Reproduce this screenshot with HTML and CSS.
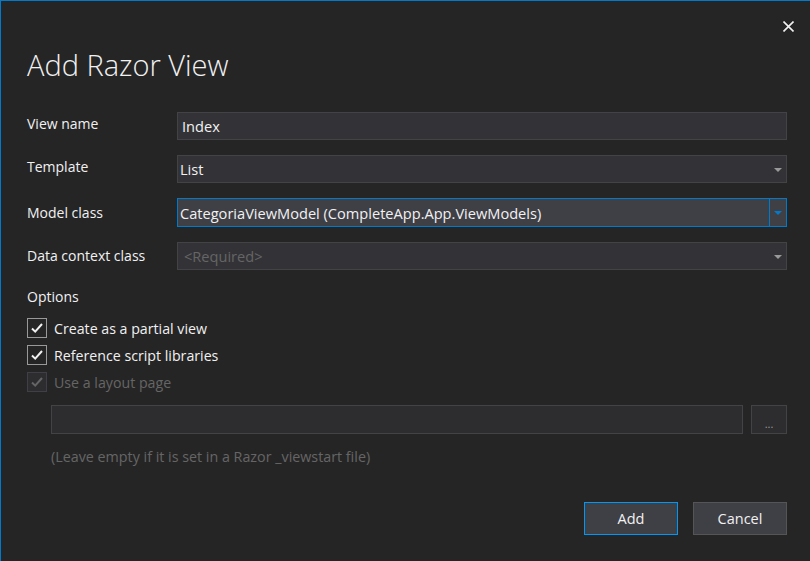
FILE: index.html
```html
<!DOCTYPE html>
<html>
<head>
<meta charset="utf-8">
<link rel="stylesheet" href="styles.css">
</head>
<body>
<div class="dialog">
  <div class="header">
    <h1 class="title">Add Razor View</h1>
    <button class="close" aria-label="Close">
      <svg width="11" height="11" viewBox="0 0 11 11"><path d="M0.5 0.5 L10.5 10.5 M10.5 0.5 L0.5 10.5" stroke="#f1f1f1" stroke-width="1.6" fill="none"/></svg>
    </button>
  </div>

  <div class="form">
    <div class="label up">View name</div>
    <div class="field"><span class="value">Index</span></div>

    <div class="label up">Template</div>
    <div class="field select"><span class="value">List</span><span class="arrow-box"><span class="arrow"></span></span></div>

    <div class="label">Model class</div>
    <div class="field select focused"><span class="value">CategoriaViewModel (CompleteApp.App.ViewModels)</span><span class="arrow-box sep"><span class="arrow blue"></span></span></div>

    <div class="label">Data context class</div>
    <div class="field select disabled"><span class="value">&lt;Required&gt;</span><span class="arrow-box"><span class="arrow"></span></span></div>
  </div>

  <div class="options-title">Options</div>
  <div class="checks">
    <div class="check-row"><span class="box"><svg width="14" height="12" viewBox="0 0 14 12"><path d="M2 6.5 L5.2 9.6 L12 2" stroke="#f1f1f1" stroke-width="2" fill="none"/></svg></span><span>Create as a partial view</span></div>
    <div class="check-row"><span class="box"><svg width="14" height="12" viewBox="0 0 14 12"><path d="M2 6.5 L5.2 9.6 L12 2" stroke="#f1f1f1" stroke-width="2" fill="none"/></svg></span><span>Reference script libraries</span></div>
    <div class="check-row disabled"><span class="box"><svg width="14" height="12" viewBox="0 0 14 12"><path d="M2 6.5 L5.2 9.6 L12 2" stroke="#656565" stroke-width="2" fill="none"/></svg></span><span>Use a layout page</span></div>
  </div>

  <div class="layout-row">
    <div class="layout-input"></div>
    <div class="browse"><span class="dots">...</span></div>
  </div>
  <div class="hint">(Leave empty if it is set in a Razor _viewstart file)</div>

  <div class="buttons">
    <button class="btn primary">Add</button>
    <button class="btn">Cancel</button>
  </div>
</div>
</body>
</html>
```

FILE: styles.css
```css
* { box-sizing: border-box; }
html, body { margin: 0; padding: 0; }
body {
  width: 810px;
  height: 561px;
  background: #252526;
  border-left: 1px solid #007acc;
  border-top: 1px solid #007acc;
  font-family: "Open Sans", "Noto Sans", sans-serif;
  font-size: 14px;
  color: #f1f1f1;
  overflow: hidden;
}
.dialog {
  padding: 0 23px 0 26px;
}
.header {
  display: flex;
  justify-content: space-between;
  align-items: flex-start;
  height: 111px;
}
.title {
  margin: 44px 0 0 0;
  font-size: 29px;
  font-weight: 300;
  line-height: 40px;
  color: #f1f1f1;
}
.close {
  margin-top: 19px;
  margin-right: -8px;
  background: none;
  border: 0;
  padding: 0;
  width: 13px;
  height: 13px;
  display: flex;
  align-items: center;
  justify-content: center;
}
.form {
  display: grid;
  grid-template-columns: 150px 1fr;
  row-gap: 15px;
  align-items: center;
}
.label {
  line-height: 20px;
}
.label.up { margin-top: -5px; }
.field {
  height: 28px;
  background: #333337;
  border: 1px solid #434346;
  display: flex;
  align-items: center;
  padding-left: 4px;
  line-height: 20px;
  font-size: 14.6px;
}
.field.select { padding-left: 2px; }
.field .value { flex: 1; white-space: nowrap; overflow: hidden; }
.field.focused {
  height: 29px;
  background: #3f3f46;
  border-color: #007acc;
}
.field.disabled .value { color: #656565; padding-left: 4px; }
.arrow-box {
  width: 17px;
  align-self: stretch;
  display: flex;
  align-items: center;
  justify-content: center;
}
.arrow-box.sep { border-left: 1px solid #007acc; }
.arrow {
  width: 0; height: 0;
  border-left: 4px solid transparent;
  border-right: 4px solid transparent;
  border-top: 4px solid #999999;
  margin-top: 1px;
}
.arrow.blue { border-top-color: #007acc; }

.options-title {
  margin-top: 17px;
  line-height: 20px;
}
.checks {
  margin-top: 11px;
  display: flex;
  flex-direction: column;
  gap: 7px;
  font-size: 14.2px;
}
.check-row {
  display: flex;
  align-items: center;
  gap: 7px;
  height: 20px;
}
.box {
  width: 20px; height: 20px;
  border: 1px solid #999999;
  display: flex;
  align-items: center;
  justify-content: center;
}
.check-row.disabled { color: #656565; }
.check-row.disabled .box { border-color: #3f3f46; background: #2d2d30; }

.layout-row {
  display: flex;
  gap: 8px;
  margin-top: 13px;
  margin-left: 24px;
}
.layout-input {
  flex: 1;
  height: 29px;
  background: #2d2d30;
  border: 1px solid #434346;
}
.browse {
  width: 36px; height: 29px;
  background: #2d2d30;
  border: 1px solid #434346;
  display: flex;
  align-items: flex-end;
  justify-content: center;
  color: #999999;
  font-size: 11px;
  line-height: 18px;
}
.hint {
  margin-left: 24px;
  margin-top: 13px;
  color: #656565;
  font-size: 14.3px;
  line-height: 20px;
}
.buttons {
  display: flex;
  justify-content: flex-end;
  gap: 15px;
  margin-top: 35px;
}
.btn {
  width: 94px;
  height: 33px;
  background: #3f3f46;
  border: 1px solid #555555;
  color: #f1f1f1;
  font-family: inherit;
  font-size: 14.5px;
  padding: 0;
}
.btn.primary { border-color: #0097fb; }
```
